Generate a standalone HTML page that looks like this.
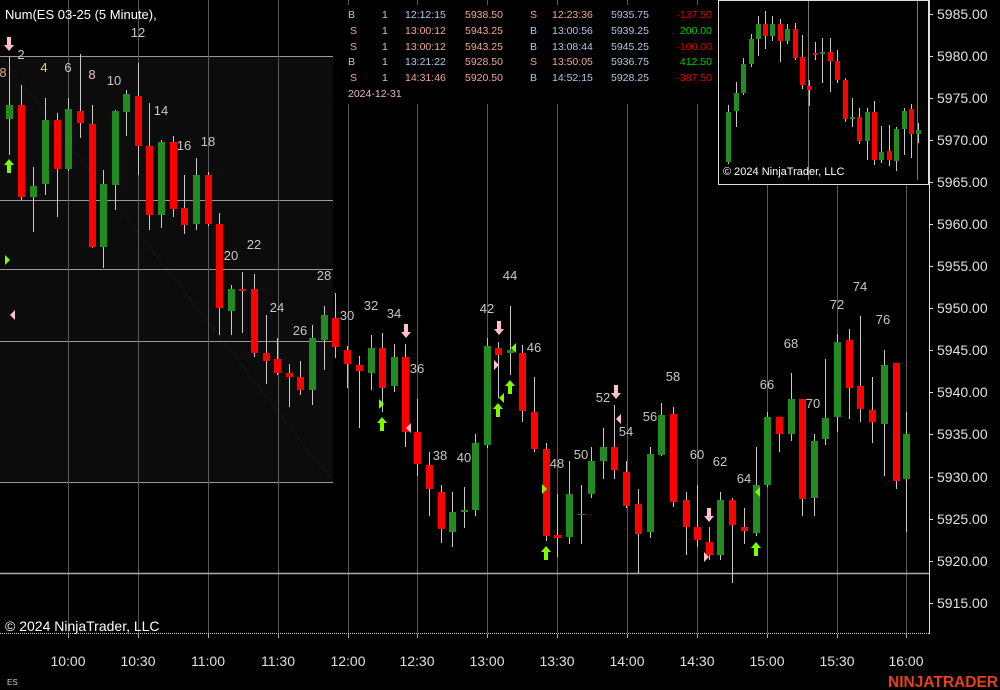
<!DOCTYPE html>
<html><head><meta charset="utf-8"><style>
html,body{margin:0;padding:0;background:#000;width:1000px;height:690px;overflow:hidden}
svg{display:block}
text{font-family:"Liberation Sans",sans-serif}
</style></head><body>
<svg width="1000" height="690" viewBox="0 0 1000 690" xmlns="http://www.w3.org/2000/svg">
<defs>
<polygon id="ua" points="0,0 5,6 2,6 2,14 -2,14 -2,6 -5,6" fill="#7cfc00"/>
<polygon id="da" points="0,14 5,8 2,8 2,0 -2,0 -2,8 -5,8" fill="#ffc0cb"/>
</defs>
<rect width="1000" height="690" fill="#000"/>
<!-- shaded region -->
<rect x="0" y="56" width="333" height="426" fill="#0c0c0c"/>
<line x1="0" y1="56" x2="333" y2="482" stroke="#161616"/>
<g stroke="#9a9a9a" stroke-width="1">
<line x1="0" y1="56.5" x2="333" y2="56.5"/>
<line x1="0" y1="200.5" x2="333" y2="200.5"/>
<line x1="0" y1="269.5" x2="333" y2="269.5"/>
<line x1="0" y1="341.5" x2="333" y2="341.5"/>
<line x1="0" y1="482.5" x2="333" y2="482.5"/>
</g>
<!-- vertical grid -->
<g stroke="#5a5a5a" stroke-width="1">
<line x1="68.5" y1="0" x2="68.5" y2="633"/><line x1="138.5" y1="0" x2="138.5" y2="633"/>
<line x1="208.5" y1="0" x2="208.5" y2="633"/><line x1="278.5" y1="0" x2="278.5" y2="633"/>
<line x1="348.5" y1="0" x2="348.5" y2="633"/><line x1="417.5" y1="0" x2="417.5" y2="633"/>
<line x1="487.5" y1="0" x2="487.5" y2="633"/><line x1="557.5" y1="0" x2="557.5" y2="633"/>
<line x1="627.5" y1="0" x2="627.5" y2="633"/><line x1="697.5" y1="0" x2="697.5" y2="633"/>
<line x1="767.5" y1="0" x2="767.5" y2="633"/><line x1="837.5" y1="0" x2="837.5" y2="633"/>
<line x1="906.5" y1="0" x2="906.5" y2="633"/>
</g>
<line x1="0" y1="573.5" x2="929" y2="573.5" stroke="#aaa" stroke-width="1.5"/>
<!-- candles -->
<g stroke="#c8c8c8" stroke-width="1">
<line x1="9.5" y1="57" x2="9.5" y2="155"/><line x1="21.5" y1="85" x2="21.5" y2="200"/><line x1="33.5" y1="167" x2="33.5" y2="232"/><line x1="45.5" y1="98" x2="45.5" y2="195"/><line x1="57.5" y1="113" x2="57.5" y2="217"/><line x1="68.5" y1="98" x2="68.5" y2="171"/><line x1="80.5" y1="54" x2="80.5" y2="138"/><line x1="92.5" y1="105" x2="92.5" y2="248"/><line x1="103.5" y1="170" x2="103.5" y2="268"/><line x1="115.5" y1="110" x2="115.5" y2="210"/><line x1="126.5" y1="90" x2="126.5" y2="136"/><line x1="138.5" y1="63" x2="138.5" y2="175"/><line x1="149.5" y1="103" x2="149.5" y2="230"/><line x1="161.5" y1="140" x2="161.5" y2="228"/><line x1="173.5" y1="136" x2="173.5" y2="217"/><line x1="184.5" y1="175" x2="184.5" y2="234"/><line x1="196.5" y1="158" x2="196.5" y2="230"/><line x1="208.5" y1="172" x2="208.5" y2="226"/><line x1="219.5" y1="213" x2="219.5" y2="335"/><line x1="231.5" y1="285" x2="231.5" y2="335"/><line x1="242.5" y1="272" x2="242.5" y2="333"/><line x1="254.5" y1="274" x2="254.5" y2="357"/><line x1="266.5" y1="315" x2="266.5" y2="384"/><line x1="277.5" y1="338" x2="277.5" y2="375"/><line x1="289.5" y1="364" x2="289.5" y2="407"/><line x1="300.5" y1="361" x2="300.5" y2="395"/><line x1="312.5" y1="325" x2="312.5" y2="405"/><line x1="324.5" y1="306" x2="324.5" y2="370"/><line x1="335.5" y1="293" x2="335.5" y2="358"/><line x1="347.5" y1="346" x2="347.5" y2="388"/><line x1="359.5" y1="356" x2="359.5" y2="428"/><line x1="371.5" y1="335" x2="371.5" y2="390"/><line x1="382.5" y1="333" x2="382.5" y2="412"/><line x1="394.5" y1="344" x2="394.5" y2="392"/><line x1="405.5" y1="344" x2="405.5" y2="447"/><line x1="417.5" y1="399" x2="417.5" y2="476"/><line x1="429.5" y1="452" x2="429.5" y2="516"/><line x1="441.5" y1="485" x2="441.5" y2="543"/><line x1="452.5" y1="492" x2="452.5" y2="547"/><line x1="464.5" y1="487" x2="464.5" y2="528"/><line x1="475.5" y1="434" x2="475.5" y2="516"/><line x1="487.5" y1="338" x2="487.5" y2="448"/><line x1="498.5" y1="342" x2="498.5" y2="398"/><line x1="510.5" y1="306" x2="510.5" y2="375"/><line x1="522.5" y1="345" x2="522.5" y2="422"/><line x1="534.5" y1="377" x2="534.5" y2="452"/><line x1="546.5" y1="443" x2="546.5" y2="541"/><line x1="557.5" y1="494" x2="557.5" y2="557"/><line x1="569.5" y1="461" x2="569.5" y2="544"/><line x1="581.5" y1="485" x2="581.5" y2="544"/><line x1="591.5" y1="447" x2="591.5" y2="498"/><line x1="603.5" y1="428" x2="603.5" y2="479"/><line x1="614.5" y1="405" x2="614.5" y2="479"/><line x1="626.5" y1="461" x2="626.5" y2="508"/><line x1="638.5" y1="489" x2="638.5" y2="573"/><line x1="650.5" y1="447" x2="650.5" y2="538"/><line x1="661.5" y1="403" x2="661.5" y2="456"/><line x1="673.5" y1="407" x2="673.5" y2="507"/><line x1="686.5" y1="492" x2="686.5" y2="555"/><line x1="697.5" y1="485" x2="697.5" y2="547"/><line x1="709.5" y1="527" x2="709.5" y2="560"/><line x1="720.5" y1="492" x2="720.5" y2="560"/><line x1="732.5" y1="498" x2="732.5" y2="583"/><line x1="744.5" y1="508" x2="744.5" y2="544"/><line x1="756.5" y1="447" x2="756.5" y2="536"/><line x1="767.5" y1="412" x2="767.5" y2="487"/><line x1="779.5" y1="417" x2="779.5" y2="452"/><line x1="791.5" y1="373" x2="791.5" y2="441"/><line x1="802.5" y1="399" x2="802.5" y2="516"/><line x1="814.5" y1="434" x2="814.5" y2="516"/><line x1="825.5" y1="359" x2="825.5" y2="445"/><line x1="837.5" y1="334" x2="837.5" y2="432"/><line x1="849.5" y1="329" x2="849.5" y2="419"/><line x1="860.5" y1="316" x2="860.5" y2="422"/><line x1="872.5" y1="377" x2="872.5" y2="443"/><line x1="884.5" y1="350" x2="884.5" y2="476"/><line x1="896.5" y1="363" x2="896.5" y2="489"/><line x1="906.5" y1="412" x2="906.5" y2="532"/>
</g>
<g fill="#228b22">
<rect x="6" y="105" width="7" height="14"/><rect x="30" y="186" width="7" height="11"/><rect x="42" y="120" width="7" height="64"/><rect x="65" y="109" width="7" height="60"/><rect x="100" y="184" width="7" height="63"/><rect x="112" y="111" width="7" height="74"/><rect x="123" y="94" width="7" height="18"/><rect x="158" y="142" width="7" height="73"/><rect x="193" y="175" width="7" height="49"/><rect x="228" y="289" width="7" height="22"/><rect x="309" y="338" width="7" height="52"/><rect x="321" y="315" width="7" height="25"/><rect x="368" y="348" width="7" height="25"/><rect x="391" y="357" width="7" height="29"/><rect x="449" y="512" width="7" height="20"/><rect x="461" y="510" width="7" height="2"/><rect x="472" y="443" width="7" height="67"/><rect x="484" y="346" width="7" height="99"/><rect x="507" y="350" width="7" height="3"/><rect x="566" y="494" width="7" height="43"/><rect x="578" y="514" width="7" height="1"/><rect x="588" y="461" width="7" height="33"/><rect x="600" y="447" width="7" height="14"/><rect x="647" y="454" width="7" height="78"/><rect x="658" y="415" width="7" height="40"/><rect x="717" y="500" width="7" height="55"/><rect x="753" y="485" width="7" height="48"/><rect x="764" y="417" width="7" height="68"/><rect x="788" y="399" width="7" height="35"/><rect x="811" y="441" width="7" height="57"/><rect x="822" y="418" width="7" height="21"/><rect x="834" y="342" width="7" height="75"/><rect x="881" y="365" width="7" height="59"/><rect x="903" y="434" width="7" height="45"/>
</g>
<g fill="#ff0000">
<rect x="18" y="105" width="7" height="92"/><rect x="54" y="120" width="7" height="49"/><rect x="77" y="111" width="7" height="12"/><rect x="89" y="124" width="7" height="123"/><rect x="135" y="96" width="7" height="50"/><rect x="146" y="146" width="7" height="69"/><rect x="170" y="142" width="7" height="67"/><rect x="181" y="208" width="7" height="17"/><rect x="205" y="175" width="7" height="49"/><rect x="216" y="224" width="7" height="84"/><rect x="239" y="289" width="7" height="2"/><rect x="251" y="289" width="7" height="64"/><rect x="263" y="353" width="7" height="8"/><rect x="274" y="359" width="7" height="14"/><rect x="286" y="373" width="7" height="4"/><rect x="297" y="377" width="7" height="13"/><rect x="332" y="318" width="7" height="29"/><rect x="344" y="350" width="7" height="14"/><rect x="356" y="365" width="7" height="6"/><rect x="379" y="348" width="7" height="40"/><rect x="402" y="357" width="7" height="75"/><rect x="414" y="432" width="7" height="32"/><rect x="426" y="465" width="7" height="24"/><rect x="438" y="492" width="7" height="37"/><rect x="495" y="348" width="7" height="7"/><rect x="519" y="353" width="7" height="58"/><rect x="531" y="412" width="7" height="37"/><rect x="543" y="449" width="7" height="87"/><rect x="554" y="535" width="7" height="3"/><rect x="611" y="447" width="7" height="23"/><rect x="623" y="472" width="7" height="34"/><rect x="635" y="504" width="7" height="30"/><rect x="670" y="414" width="7" height="88"/><rect x="683" y="500" width="7" height="27"/><rect x="694" y="527" width="7" height="13"/><rect x="706" y="542" width="7" height="13"/><rect x="729" y="500" width="7" height="25"/><rect x="741" y="527" width="7" height="4"/><rect x="776" y="417" width="7" height="17"/><rect x="799" y="399" width="7" height="100"/><rect x="846" y="340" width="7" height="48"/><rect x="857" y="386" width="7" height="23"/><rect x="869" y="410" width="7" height="12"/><rect x="893" y="363" width="7" height="118"/>
</g>
<!-- bar labels -->
<g fill="#c8c8c8" font-size="13" text-anchor="middle">
<text x="3" y="77" fill="#d8b080">8</text>
<text x="21" y="59">2</text><text x="44" y="72" fill="#e0d090">4</text><text x="68" y="72">6</text><text x="92" y="79" fill="#f0c0c0">8</text><text x="114" y="85">10</text><text x="138" y="37">12</text><text x="161" y="115">14</text><text x="184" y="150">16</text><text x="208" y="146">18</text><text x="231" y="260">20</text><text x="254" y="249">22</text><text x="277" y="312">24</text><text x="300" y="335">26</text><text x="324" y="280">28</text><text x="347" y="320">30</text><text x="371" y="310">32</text><text x="394" y="318">34</text><text x="417" y="373">36</text><text x="440" y="460">38</text><text x="464" y="462">40</text><text x="487" y="313">42</text><text x="510" y="280">44</text><text x="534" y="352">46</text><text x="557" y="468">48</text><text x="581" y="459">50</text><text x="603" y="402">52</text><text x="626" y="436">54</text><text x="650" y="421">56</text><text x="673" y="381">58</text><text x="697" y="459">60</text><text x="720" y="466">62</text><text x="744" y="483">64</text><text x="767" y="389">66</text><text x="791" y="348">68</text><text x="813" y="408">70</text><text x="837" y="309">72</text><text x="860" y="291">74</text><text x="883" y="324">76</text>
</g>
<!-- arrows -->
<use href="#da" x="9" y="37"/><use href="#da" x="406" y="324"/><use href="#da" x="499" y="321"/><use href="#da" x="616" y="385"/><use href="#da" x="709" y="508"/>
<use href="#ua" x="9" y="159"/><use href="#ua" x="382" y="417"/><use href="#ua" x="498" y="403"/><use href="#ua" x="510" y="380"/><use href="#ua" x="546" y="546"/><use href="#ua" x="756" y="542"/>
<g fill="#7cfc00"><polygon points="5,255 10,260 5,265"/><polygon points="379,399 384,404 379,409"/><polygon points="542,484 547,489 542,494"/><polygon points="516,343 511,348 516,353"/><polygon points="504,393 499,398 504,403"/><polygon points="760,487 755,492 760,497"/></g>
<g fill="#ffc0cb"><polygon points="15,310 10,315 15,320"/><polygon points="411,423 406,428 411,433"/><polygon points="494,360 499,365 494,370"/><polygon points="621,414 616,419 621,424"/><polygon points="704,552 709,557 704,562"/></g>
<!-- title -->
<text x="5" y="19" fill="#fff" font-size="13">Num(ES 03-25 (5 Minute),</text>
<text x="5" y="631" fill="#fff" font-size="14">© 2024 NinjaTrader, LLC</text>
<!-- trade table -->
<rect x="341" y="5" width="376" height="99" fill="#000"/>
<g font-size="10.5">
<g fill="#b0c8e8"><text x="348" y="18">B</text><text x="350" y="34" fill="#f0a890">S</text><text x="350" y="50" fill="#f0a890">S</text><text x="348" y="65">B</text><text x="350" y="81" fill="#f0a890">S</text></g>
<g fill="#ccc"><text x="382" y="18">1</text><text x="382" y="34">1</text><text x="382" y="50">1</text><text x="382" y="65">1</text><text x="382" y="81">1</text></g>
<g fill="#b0c8e8"><text x="405" y="18">12:12:15</text><text x="405" y="34" fill="#f0a890">13:00:12</text><text x="405" y="50" fill="#f0a890">13:00:12</text><text x="405" y="65">13:21:22</text><text x="405" y="81" fill="#f0a890">14:31:46</text></g>
<g fill="#f0a890"><text x="465" y="18">5938.50</text><text x="465" y="34">5943.25</text><text x="465" y="50">5943.25</text><text x="465" y="65">5928.50</text><text x="465" y="81">5920.50</text></g>
<g fill="#f0a890"><text x="530" y="18">S</text><text x="530" y="34" fill="#b0c8e8">B</text><text x="530" y="50" fill="#b0c8e8">B</text><text x="530" y="65">S</text><text x="530" y="81" fill="#b0c8e8">B</text></g>
<g fill="#b0c8e8"><text x="552" y="18" fill="#f0a890">12:23:36</text><text x="552" y="34">13:00:56</text><text x="552" y="50">13:08:44</text><text x="552" y="65" fill="#f0a890">13:50:05</text><text x="552" y="81">14:52:15</text></g>
<g fill="#b0c8e8"><text x="611" y="18">5935.75</text><text x="611" y="34">5939.25</text><text x="611" y="50">5945.25</text><text x="611" y="65">5936.75</text><text x="611" y="81">5928.25</text></g>
<g text-anchor="end"><text x="712" y="18" fill="#dd0000">-137.50</text><text x="712" y="34" fill="#00cc00">200.00</text><text x="712" y="50" fill="#dd0000">-100.00</text><text x="712" y="65" fill="#00cc00">412.50</text><text x="712" y="81" fill="#dd0000">-387.50</text></g>
<text x="348" y="97" fill="#f0b8c0">2024-12-31</text>
</g>
<!-- inset -->
<rect x="718.5" y="0.5" width="210" height="184" fill="#000" stroke="#ddd"/>
<g stroke="#777"><line x1="808.5" y1="1" x2="808.5" y2="180"/><line x1="917.5" y1="1" x2="917.5" y2="180"/></g>
<g stroke="#c8c8c8">
<line x1="728.5" y1="105" x2="728.5" y2="164"/><line x1="736.5" y1="82" x2="736.5" y2="127"/><line x1="743.5" y1="58" x2="743.5" y2="95"/><line x1="751.5" y1="34" x2="751.5" y2="67"/><line x1="758.5" y1="16" x2="758.5" y2="56"/><line x1="765.5" y1="11" x2="765.5" y2="49"/><line x1="772.5" y1="16" x2="772.5" y2="41"/><line x1="780.5" y1="19" x2="780.5" y2="62"/><line x1="787.5" y1="24" x2="787.5" y2="44"/><line x1="795.5" y1="23" x2="795.5" y2="60"/><line x1="802.5" y1="35" x2="802.5" y2="89"/><line x1="809.5" y1="80" x2="809.5" y2="106"/><line x1="815.5" y1="42" x2="815.5" y2="60"/><line x1="822.5" y1="38" x2="822.5" y2="83"/><line x1="830.5" y1="38" x2="830.5" y2="92"/><line x1="837.5" y1="50" x2="837.5" y2="83"/><line x1="845.5" y1="78" x2="845.5" y2="122"/><line x1="852.5" y1="98" x2="852.5" y2="127"/><line x1="859.5" y1="108" x2="859.5" y2="144"/><line x1="867.5" y1="108" x2="867.5" y2="160"/><line x1="874.5" y1="101" x2="874.5" y2="165"/><line x1="881.5" y1="126" x2="881.5" y2="163"/><line x1="889.5" y1="125" x2="889.5" y2="166"/><line x1="896.5" y1="127" x2="896.5" y2="171"/><line x1="904.5" y1="108" x2="904.5" y2="155"/><line x1="911.5" y1="104" x2="911.5" y2="158"/><line x1="918.5" y1="123" x2="918.5" y2="143"/>
</g>
<g fill="#228b22"><rect x="726" y="112" width="5" height="50"/><rect x="734" y="93" width="5" height="18"/><rect x="741" y="64" width="5" height="29"/><rect x="749" y="39" width="5" height="25"/><rect x="756" y="24" width="5" height="15"/><rect x="770" y="24" width="5" height="12"/><rect x="785" y="29" width="5" height="12"/><rect x="820" y="52" width="5" height="2"/><rect x="850" y="117" width="5" height="2"/><rect x="865" y="112" width="5" height="29"/><rect x="879" y="152" width="5" height="8"/><rect x="894" y="129" width="5" height="32"/><rect x="902" y="111" width="5" height="18"/><rect x="916" y="130" width="5" height="4"/></g>
<g fill="#ff0000"><rect x="763" y="24" width="5" height="12"/><rect x="778" y="24" width="5" height="17"/><rect x="793" y="29" width="5" height="29"/><rect x="800" y="57" width="5" height="28"/><rect x="807" y="86" width="5" height="4"/><rect x="813" y="53" width="5" height="2"/><rect x="828" y="52" width="5" height="9"/><rect x="835" y="61" width="5" height="19"/><rect x="843" y="80" width="5" height="39"/><rect x="857" y="117" width="5" height="24"/><rect x="872" y="112" width="5" height="48"/><rect x="887" y="151" width="5" height="9"/><rect x="909" y="109" width="5" height="25"/></g>
<text x="723" y="175" fill="#fff" font-size="11">© 2024 NinjaTrader, LLC</text>
<!-- right axis -->
<line x1="929.5" y1="0" x2="929.5" y2="634" stroke="#ddd"/>
<g stroke="#ddd"><line x1="929" y1="14.5" x2="933" y2="14.5"/><line x1="929" y1="56.5" x2="933" y2="56.5"/><line x1="929" y1="98.5" x2="933" y2="98.5"/><line x1="929" y1="140.5" x2="933" y2="140.5"/><line x1="929" y1="182.5" x2="933" y2="182.5"/><line x1="929" y1="224.5" x2="933" y2="224.5"/><line x1="929" y1="266.5" x2="933" y2="266.5"/><line x1="929" y1="308.5" x2="933" y2="308.5"/><line x1="929" y1="350.5" x2="933" y2="350.5"/><line x1="929" y1="392.5" x2="933" y2="392.5"/><line x1="929" y1="434.5" x2="933" y2="434.5"/><line x1="929" y1="477.5" x2="933" y2="477.5"/><line x1="929" y1="519.5" x2="933" y2="519.5"/><line x1="929" y1="561.5" x2="933" y2="561.5"/><line x1="929" y1="603.5" x2="933" y2="603.5"/></g>
<g fill="#e0e0e0" font-size="14">
<text x="937" y="19">5985.00</text><text x="937" y="61">5980.00</text><text x="937" y="103">5975.00</text><text x="937" y="145">5970.00</text><text x="937" y="187">5965.00</text><text x="937" y="229">5960.00</text><text x="937" y="271">5955.00</text><text x="937" y="313">5950.00</text><text x="937" y="355">5945.00</text><text x="937" y="397">5940.00</text><text x="937" y="439">5935.00</text><text x="937" y="482">5930.00</text><text x="937" y="524">5925.00</text><text x="937" y="566">5920.00</text><text x="937" y="608">5915.00</text>
</g>
<!-- bottom axis -->
<line x1="0" y1="633.5" x2="930" y2="633.5" stroke="#ccc" stroke-dasharray="1,1"/>
<g stroke="#aaa"><line x1="68.5" y1="634" x2="68.5" y2="638"/><line x1="138.5" y1="634" x2="138.5" y2="638"/><line x1="208.5" y1="634" x2="208.5" y2="638"/><line x1="278.5" y1="634" x2="278.5" y2="638"/><line x1="348.5" y1="634" x2="348.5" y2="638"/><line x1="417.5" y1="634" x2="417.5" y2="638"/><line x1="487.5" y1="634" x2="487.5" y2="638"/><line x1="557.5" y1="634" x2="557.5" y2="638"/><line x1="627.5" y1="634" x2="627.5" y2="638"/><line x1="697.5" y1="634" x2="697.5" y2="638"/><line x1="767.5" y1="634" x2="767.5" y2="638"/><line x1="837.5" y1="634" x2="837.5" y2="638"/><line x1="906.5" y1="634" x2="906.5" y2="638"/></g>
<g fill="#e0e0e0" font-size="14" text-anchor="middle">
<text x="68" y="666">10:00</text><text x="138" y="666">10:30</text><text x="208" y="666">11:00</text><text x="278" y="666">11:30</text><text x="348" y="666">12:00</text><text x="417" y="666">12:30</text><text x="487" y="666">13:00</text><text x="557" y="666">13:30</text><text x="627" y="666">14:00</text><text x="697" y="666">14:30</text><text x="767" y="666">15:00</text><text x="837" y="666">15:30</text><text x="906" y="666">16:00</text>
</g>
<text x="7" y="685" fill="#ccc" font-size="8">ES</text>
<text x="998" y="687" fill="#e8401c" font-size="16" font-weight="bold" text-anchor="end" textLength="110" lengthAdjust="spacingAndGlyphs">NINJATRADER</text>
</svg>
</body></html>
